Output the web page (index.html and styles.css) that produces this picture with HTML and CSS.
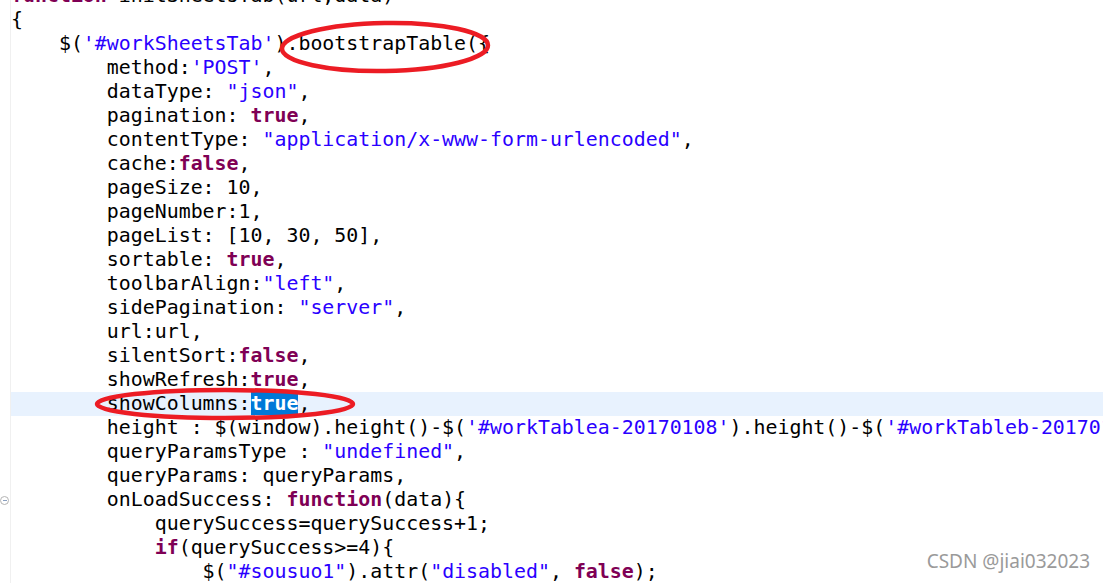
FILE: index.html
```html
<html>
    <head>
        <meta charset="utf-8">
        <link rel="stylesheet" href="styles.css">
    </head>
    <body>
        <div class="editor">
            <div class="line"><span class="gutter"></span><span class="code"><span class="kw">function</span> initSheetsTab(url,data)</span></div>
            <div class="line"><span class="gutter"></span><span class="code">{</span></div>
            <div class="line"><span class="gutter"></span><span class="code">    $(<span class="str">'#workSheetsTab'</span>).bootstrapTable({</span></div>
            <div class="line"><span class="gutter"></span><span class="code">        method:<span class="str">'POST'</span>,</span></div>
            <div class="line"><span class="gutter"></span><span class="code">        dataType: <span class="str">"json"</span>,</span></div>
            <div class="line"><span class="gutter"></span><span class="code">        pagination: <span class="kw">true</span>,</span></div>
            <div class="line"><span class="gutter"></span><span class="code">        contentType: <span class="str">"application/x-www-form-urlencoded"</span>,</span></div>
            <div class="line"><span class="gutter"></span><span class="code">        cache:<span class="kw">false</span>,</span></div>
            <div class="line"><span class="gutter"></span><span class="code">        pageSize: 10,</span></div>
            <div class="line"><span class="gutter"></span><span class="code">        pageNumber:1,</span></div>
            <div class="line"><span class="gutter"></span><span class="code">        pageList: [10, 30, 50],</span></div>
            <div class="line"><span class="gutter"></span><span class="code">        sortable: <span class="kw">true</span>,</span></div>
            <div class="line"><span class="gutter"></span><span class="code">        toolbarAlign:<span class="str">"left"</span>,</span></div>
            <div class="line"><span class="gutter"></span><span class="code">        sidePagination: <span class="str">"server"</span>,</span></div>
            <div class="line"><span class="gutter"></span><span class="code">        url:url,</span></div>
            <div class="line"><span class="gutter"></span><span class="code">        silentSort:<span class="kw">false</span>,</span></div>
            <div class="line"><span class="gutter"></span><span class="code">        showRefresh:<span class="kw">true</span>,</span></div>
            <div class="line current"><span class="gutter"></span><span class="code">        showColumns:<span class="sel">true</span>,</span></div>
            <div class="line"><span class="gutter"></span><span class="code">        height : $(window).height()-$(<span class="str">'#workTablea-20170108'</span>).height()-$(<span class="str">'#workTableb-20170108'</span>).height()-30,</span></div>
            <div class="line"><span class="gutter"></span><span class="code">        queryParamsType : <span class="str">"undefined"</span>,</span></div>
            <div class="line"><span class="gutter"></span><span class="code">        queryParams: queryParams,</span></div>
            <div class="line"><span class="gutter"><span class="fold"></span></span><span class="code">        onLoadSuccess: <span class="kw">function</span>(data){</span></div>
            <div class="line"><span class="gutter"></span><span class="code">            querySuccess=querySuccess+1;</span></div>
            <div class="line"><span class="gutter"></span><span class="code">            <span class="kw">if</span>(querySuccess&gt;=4){</span></div>
            <div class="line"><span class="gutter"></span><span class="code">                $(<span class="str">"#sousuo1"</span>).attr(<span class="str">"disabled"</span>, <span class="kw">false</span>);</span></div>
        </div>

        <!-- hand drawn marks on top of the code -->
        <svg class="marks" width="1103" height="583">
            <ellipse cx="385" cy="47" rx="103" ry="24" transform="rotate(-1 385 47)" />
            <ellipse cx="225" cy="404" rx="128" ry="14" />
        </svg>

        <div class="watermark">CSDN @jiai032023</div>
    </body>
</html>
```
FILE: styles.css
```css
html, body {
    margin: 0;
    padding: 0;
    width: 1103px;
    height: 583px;
    overflow: hidden;
    background-color: #ffffff;
}
.editor {
    margin-top: -16px;
    font-family: "DejaVu Sans Mono", "Liberation Mono", monospace;
    font-size: 19.9px;
    color: #000000;
}
.line {
    display: flex;
    height: 24px;
    line-height: 24px;
    white-space: pre;
}
.gutter {
    flex: 0 0 10px;
    border-right: 1px solid #f0f0f0;
    position: relative;
}
.code {
    flex: 1;
}
.current .code {
    background-color: #e8f2fe;
}
.kw {
    color: #7f0055;
    font-weight: bold;
}
.str {
    color: #2a00ff;
}
.sel {
    background-color: #0078d7;
    color: #ffffff;
    font-weight: bold;
}
.fold {
    position: absolute;
    left: 0;
    top: 8px;
    width: 7px;
    height: 7px;
    border: 1px solid #b4b4b4;
    border-radius: 50%;
    background-color: #ffffff;
}
.fold::after {
    content: "";
    position: absolute;
    left: 2px;
    top: 3px;
    width: 4px;
    height: 1px;
    background-color: #8aa0c0;
}
.marks {
    position: absolute;
    left: 0;
    top: 0;
}
.marks ellipse {
    fill: none;
    stroke: #ec1c24;
    stroke-width: 4.5;
}
.watermark {
    position: absolute;
    right: 13px;
    bottom: 9px;
    font-family: "Noto Sans", "Open Sans", sans-serif;
    font-size: 19px;
    color: #9a9a9a;
    text-shadow: 0 0 1px #ffffff;
}
```
